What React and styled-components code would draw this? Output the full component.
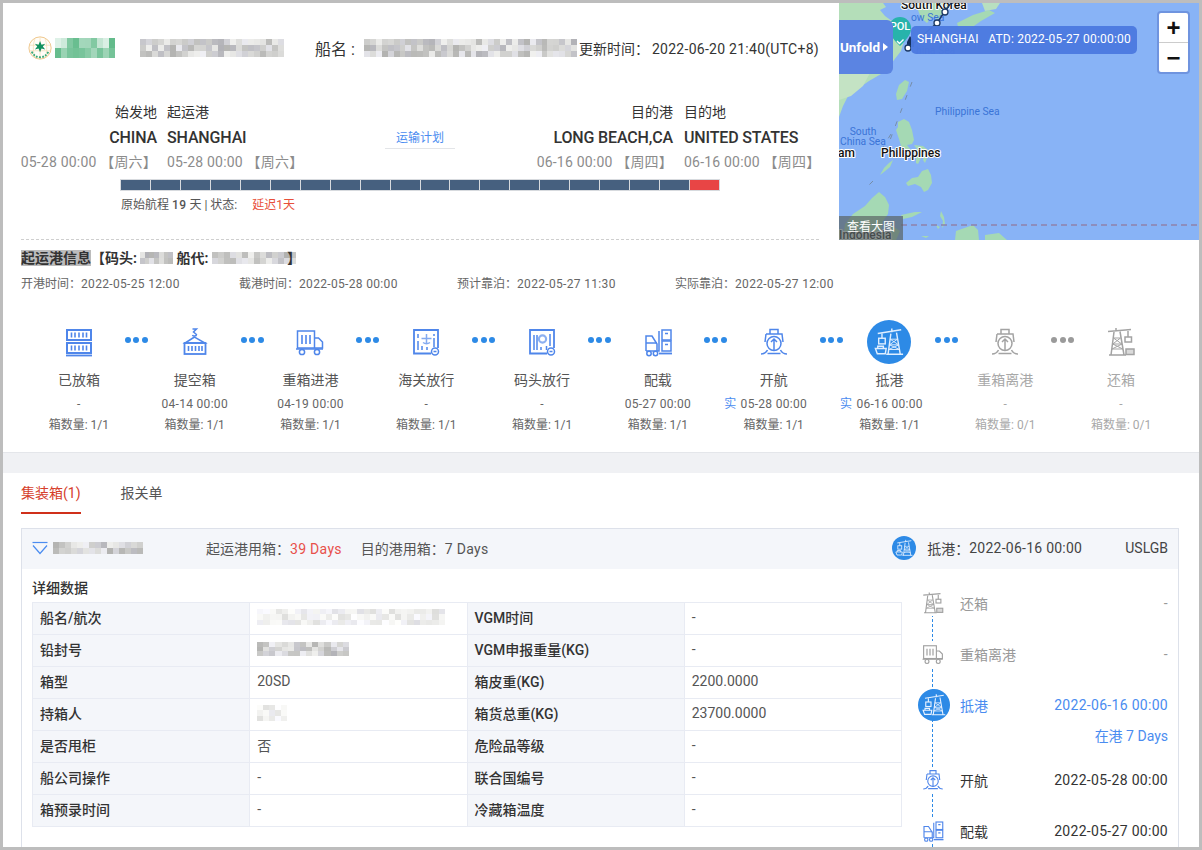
import React from 'react'
import styled, { createGlobalStyle } from 'styled-components'

const GlobalStyle = createGlobalStyle`
  html, body { margin: 0; padding: 0; background: #fff; }
  body { font-family: Roboto, "Noto Sans CJK SC", sans-serif; color: #333; }
  * { box-sizing: border-box; }
`

const Frame = styled.div`
  width: 1202px;
  height: 850px;
  border: 3px solid #bdbdbd;
  overflow: hidden;
  background: #fff;
`

const TopRow = styled.div`
  display: flex;
  height: 237px;
`

const Summary = styled.div`
  width: 836px;
  padding: 0 20px 0 18px;
  display: flex;
  flex-direction: column;
`

const Header = styled.div`
  height: 90px;
  display: flex;
  align-items: center;
  padding-left: 7px;
  margin-bottom: 9px;
`

const LogoText = styled.div`
  display: flex;
  align-items: center;
  margin: 0 25px 0 3px;
`

const ShipLabel = styled.span`
  font-size: 16px;
  color: #333;
  margin: 0 9px 0 31px;
  white-space: nowrap;
`

const UpdateTime = styled.span`
  font-size: 14px;
  color: #333;
  margin-left: 2px;
  white-space: nowrap;
  b {
    font-weight: 400;
    margin-left: 3px;
    letter-spacing: 0.27px;
  }
`

const RouteGrid = styled.div`
  display: grid;
  grid-template-columns: 136px 228px 70px 218px 1fr;
`

const PortCol = styled.div`
  display: flex;
  flex-direction: column;
  align-items: ${(p) => (p.$end ? 'flex-end' : 'flex-start')};
  padding-left: ${(p) => p.$inset || 0}px;
  white-space: nowrap;
`

const PortLabel = styled.div`
  font-size: 14px;
  line-height: 20px;
  color: #333;
`

const PortName = styled.div`
  height: 30px;
  padding-top: 1px;
  font-size: 16px;
  line-height: 30px;
  font-weight: 500;
  letter-spacing: -0.15px;
  color: #333;
`

const PortTime = styled.div`
  font-size: 14px;
  line-height: 20px;
  letter-spacing: 0.2px;
  color: #8c8c8c;
`

const PlanCol = styled.div`
  height: 47px;
  margin-top: 20px;
  padding-top: 7px;
`

const PlanLink = styled.div`
  font-size: 12px;
  line-height: 18px;
  color: #4a8cf0;
  text-align: center;
  padding-bottom: 1px;
  border-bottom: 1px solid #e3e5e8;
`

const Bar = styled.div`
  display: flex;
  gap: 1px;
  width: 600px;
  height: 12px;
  margin: 7px 0 0 99px;
  padding: 1px;
  background: #d7dade;
`

const BarCell = styled.div`
  flex: 1;
  background: ${(p) => (p.$late ? '#e84545' : '#46607f')};
`

const BarNote = styled.div`
  margin: 6px 0 0 100px;
  font-size: 12px;
  line-height: 16px;
  color: #555;
  b { font-weight: 500; letter-spacing: 0.4px; }
  em { font-style: normal; color: #e8503a; margin-left: 12px; }
`

const DashLine = styled.div`
  margin-top: auto;
  border-bottom: 1px dashed #cfcfcf;
`

const MapPanel = styled.div`
  position: relative;
  width: 360px;
  height: 237px;
  overflow: hidden;
  background: #88b3f6;
`

const Unfold = styled.div`
  position: absolute;
  left: 0;
  top: 17px;
  width: 54px;
  height: 54px;
  display: flex;
  align-items: center;
  justify-content: flex-end;
  padding-right: 5px;
  gap: 3px;
  background: #5b84e2;
  border-radius: 0 6px 6px 0;
  color: #fff;
  font-size: 13.5px;
  font-weight: 700;
  white-space: nowrap;
  i {
    flex-shrink: 0;
    border-left: 5px solid #fff;
    border-top: 4px solid transparent;
    border-bottom: 4px solid transparent;
  }
`

const MapTip = styled.div`
  position: absolute;
  left: 72px;
  top: 23px;
  width: 226px;
  height: 28px;
  padding-left: 6px;
  border-radius: 5px;
  background: rgba(76, 122, 224, 0.96);
  color: #fff;
  font-size: 12px;
  letter-spacing: 0.2px;
  line-height: 26px;
  white-space: pre;
`

const ZoomBox = styled.div`
  position: absolute;
  left: 318px;
  top: 8px;
  width: 33px;
  height: 63px;
  border: 2px solid #6f94df;
  border-radius: 4px;
  background: #fff;
  display: flex;
  flex-direction: column;
`

const ZoomBtn = styled.div`
  flex: 1;
  display: flex;
  align-items: center;
  justify-content: center;
  font: 700 24px/1 "Liberation Sans", sans-serif;
  color: #111;
  & + & { border-top: 1px solid #ccc; }
`

const BigMapLink = styled.div`
  position: absolute;
  left: 0;
  bottom: 0;
  width: 64px;
  height: 24px;
  padding-left: 8px;
  background: rgba(90, 100, 100, 0.7);
  color: #fff;
  font-size: 12px;
  line-height: 22px;
`

const Detail = styled.div`
  padding: 10px 18px 0;
`

const InfoTitle = styled.div`
  font-size: 14px;
  line-height: 16px;
  font-weight: 700;
  color: #333;
  display: flex;
  align-items: center;
  white-space: pre;
  mark { background: #bcbcbc; color: #333; }
  svg { margin-right: 3px; }
  svg:last-of-type { margin-right: -9px; }
`

const InfoRow = styled.div`
  display: grid;
  grid-template-columns: repeat(4, 218px);
  margin-top: 10px;
  font-size: 12px;
  line-height: 16px;
  color: #666;
  b { font-weight: 400; letter-spacing: 0.33px; }
`

const Steps = styled.div`
  display: flex;
  margin-top: 28px;
`

const Step = styled.div`
  position: relative;
  width: 115.8px;
  display: flex;
  flex-direction: column;
  align-items: center;
  color: ${(p) => (p.$off ? '#a8a8a8' : '#666')};
`

const StepIconWrap = styled.div`
  width: 44px;
  height: 44px;
  border-radius: 50%;
  display: flex;
  align-items: center;
  justify-content: center;
  background: ${(p) => (p.$active ? '#2d8ae6' : 'transparent')};
  color: ${(p) => (p.$active ? '#dfeeff' : p.$off ? '#a3a3a3' : '#4f86ea')};
`

const Dots = styled.div`
  position: absolute;
  right: -11px;
  top: 17px;
  display: flex;
  gap: 2.5px;
  i {
    width: 6px;
    height: 6px;
    border-radius: 50%;
    background: ${(p) => (p.$off ? '#9a9a9a' : '#2d8ae6')};
  }
`

const StepName = styled.div`
  margin-top: 6px;
  font-size: 14px;
  line-height: 20px;
  color: ${(p) => (p.$off ? '#a8a8a8' : '#555')};
`

const StepDate = styled.div`
  margin-top: 4px;
  font-size: 12px;
  line-height: 20px;
  letter-spacing: 0.3px;
  white-space: nowrap;
  span { color: #4a8cf0; margin: 0 4px 0 -16px; }
`

const StepCount = styled.div`
  margin-top: 1px;
  font-size: 12px;
  line-height: 20px;
`

const Band = styled.div`
  height: 21px;
  margin-top: 17px;
  background: #f0f1f4;
  border-top: 1px solid #e4e6ea;
`

const Tabs = styled.div`
  display: flex;
  gap: 40px;
  margin: 0 18px;
`

const Tab = styled.div`
  height: 41px;
  font-size: 14px;
  line-height: 40px;
  color: ${(p) => (p.$active ? '#d6402b' : '#555')};
  border-bottom: 2px solid ${(p) => (p.$active ? '#d0301a' : 'transparent')};
`

const Card = styled.div`
  margin: 14px 20px 0 18px;
  border: 1px solid #dde1ea;
  border-bottom: 0;
`

const CardHead = styled.div`
  height: 40px;
  display: flex;
  align-items: center;
  padding: 0 10px 3px;
  background: #f4f6fa;
  font-size: 14px;
  color: #555;
  white-space: nowrap;
`

const HeadMosaic = styled.div`
  display: flex;
  margin-left: 5px;
`

const UsedDays = styled.span`
  margin-left: ${(p) => p.$gap}px;
  b { font-weight: 400; letter-spacing: 0.3px; color: ${(p) => (p.$red ? '#e8504a' : 'inherit')}; }
`

const HeadRight = styled.div`
  margin-left: auto;
  display: flex;
  align-items: center;
  color: #444;
  b { font-weight: 400; letter-spacing: 0.25px; }
`

const MiniCircle = styled.div`
  width: 24px;
  height: 24px;
  border-radius: 50%;
  background: #2d8ae6;
  color: #e8f2ff;
  display: flex;
  align-items: center;
  justify-content: center;
  margin-right: 11px;
`

const PortCode = styled.span`
  margin-left: 43px;
`

const CardBody = styled.div`
  display: flex;
  padding: 0 10px;
`

const TableCol = styled.div`
  width: 870px;
  padding-top: 10px;
  flex-shrink: 0;
`

const TableTitle = styled.div`
  font-size: 14px;
  line-height: 18px;
  font-weight: 500;
  color: #333;
  margin-bottom: 5px;
`

const Table = styled.table`
  width: 870px;
  table-layout: fixed;
  border-collapse: collapse;
  font-size: 14px;
`

const Cell = styled.td`
  height: 32px;
  padding: 0 7px 3px;
  border: 1px solid #e8ebf3;
  background: ${(p) => (p.$head ? '#f4f6fa' : '#fff')};
  font-weight: ${(p) => (p.$head ? 500 : 400)};
  color: ${(p) => (p.$head ? '#333' : '#555')};
  white-space: nowrap;
  overflow: hidden;
  svg { display: block; }
`

const Timeline = styled.div`
  position: relative;
  flex: 1;
  margin-left: 16px;
  padding-top: 18px;
  display: flex;
  flex-direction: column;
  gap: 19px;
  &::before {
    content: '';
    position: absolute;
    left: 14px;
    top: 40px;
    bottom: 0;
    border-left: 1px dashed #2d8ae6;
  }
`

const TimeItem = styled.div`
  position: relative;
  font-size: 14px;
  color: ${(p) => p.$color};
`

const TimeMain = styled.div`
  display: flex;
  align-items: center;
  height: 32px;
`

const TimeIcon = styled.div`
  width: 30px;
  height: 26px;
  margin-right: 12px;
  display: flex;
  align-items: center;
  justify-content: center;
  background: #fff;
  color: ${(p) => p.$color};
`

const ActiveCircle = styled.div`
  width: 32px;
  height: 32px;
  margin-right: 10px;
  flex-shrink: 0;
  border-radius: 50%;
  background: #2d8ae6;
  color: #e8f2ff;
  display: flex;
  align-items: center;
  justify-content: center;
`

const TimeDate = styled.span`
  margin-left: auto;
  letter-spacing: 0.3px;
`

const TimeSub = styled.div`
  margin: 5px 0 -1px;
  line-height: 20px;
  text-align: right;
`

// pixelated stand-in for the blurred out parts of the screenshot
const Mosaic = ({ w, h, cols, rows = 3, seed = 7, green, light }) => {
  const cw = w / cols
  const ch = h / rows
  let n = seed * 97 + 13
  const rects = []
  for (let y = 0; y < rows; y++) {
    for (let x = 0; x < cols; x++) {
      n = (n * 31 + 17) % 257
      const t = n / 257
      let fill
      if (green) {
        const a = y === 0 ? 0.15 + t * 0.65 : 0.35 + t * 0.45
        fill = `rgba(60,170,110,${a.toFixed(2)})`
      } else {
        const v = Math.round((light ? 222 : 178) + t * (light ? 32 : 62))
        fill = `rgb(${v},${v},${v + (n % 3 === 0 ? 5 : -2)})`
      }
      rects.push(<rect key={`${x}-${y}`} x={x * cw} y={y * ch} width={cw + 0.3} height={ch + 0.3} fill={fill} />)
    }
  }
  return (
    <svg width={w} height={h} viewBox={`0 0 ${w} ${h}`} shapeRendering="crispEdges" style={{ flexShrink: 0 }}>
      {rects}
    </svg>
  )
}

const Logo = () => (
  <svg width="26" height="26" viewBox="0 0 26 26">
    <circle cx="13" cy="13" r="12" fill="#fffdf8" stroke="#eec384" strokeWidth="1" />
    <path d="M1.500 10h23M1.500 16h23M13 1v24M8 2c-3 6-3 16 0 22M18 2c3 6 3 16 0 22" fill="none" stroke="#f3d9ae" strokeWidth="0.7" />
    <path d="M13 5.500l1.600 4 4-1-2.600 3 2.600 3-4-1-1.600 4-1.600-4-4 1 2.600-3-2.600-3 4 1z" fill="#129160" />
    <path d="M4 17c2 4 5 6 9 6s7-2 9-6" fill="none" stroke="#3aa878" strokeWidth="2" strokeDasharray="2 1.400" />
  </svg>
)

const Chevron = () => (
  <svg width="16" height="14" viewBox="0 0 16 14" fill="none" stroke="#4a8cf0" strokeWidth="1.2">
    <path d="M0.500 1.500h15" />
    <path d="M1 4.500l7 8 7-8" />
  </svg>
)

const icons = {
  stack: (
    <>
      <rect x="4" y="4" width="24" height="10" strokeWidth="2" />
      <rect x="4" y="17" width="24" height="10" strokeWidth="2" />
      <path d="M8.500 6.500v5M12 6.500v5M16 6.500v5M20 6.500v5M23.500 6.500v5M8.500 19.500v5M12 19.500v5M16 19.500v5M20 19.500v5M23.500 19.500v5" strokeWidth="1.600" />
      <path d="M3 29.500h26" strokeWidth="1.800" />
    </>
  ),
  lift: (
    <>
      <path d="M13.500 3h4l-3 3 3 2.500c0 2-3.500 2-4 .5" />
      <path d="M15.500 11L6 17h20z" />
      <rect x="5.500" y="17" width="21" height="11" strokeWidth="1.800" />
      <path d="M9.500 20v5M13 20v5M16.500 20v5M20 20v5M23 20v5" strokeWidth="1.600" />
    </>
  ),
  truck: (
    <>
      <rect x="3.500" y="5" width="17" height="17" />
      <path d="M8 9v9M12 9v9M16 9v9" strokeWidth="1.600" />
      <path d="M21 12h3.500l4 4v6H21" />
      <path d="M2 23h27" />
      <circle cx="8" cy="26" r="2.600" />
      <circle cx="23" cy="26" r="2.600" />
    </>
  ),
  customs: (
    <>
      <path d="M21 27.500H4V4h24v18" strokeWidth="1.800" />
      <path d="M8 15v9M12 20v4M17 21v3M24 12v9M8 8v4M24 8v2" />
      <path d="M11.500 12.500h10M16.500 8v9M13 16.500c2 1.500 5 1.500 7 0" strokeOpacity="0.7" />
      <circle cx="25" cy="25.500" r="3.500" />
      <path d="M23.500 25.500h3" />
    </>
  ),
  terminal: (
    <>
      <path d="M21 27.500H4V4h24v18" strokeWidth="1.800" />
      <path d="M8 9v15M11 9v15M24 8v12M20.500 20v4M15 21v3" />
      <circle cx="16.500" cy="13" r="3.600" strokeWidth="2.200" strokeOpacity="0.65" />
      <circle cx="25" cy="25.500" r="3.500" />
      <path d="M23.500 25.500h3" />
    </>
  ),
  fork: (
    <>
      <path d="M4 25V10h6l5 8v7" />
      <path d="M4 17h11M4 25h13V5" />
      <path d="M17 27.500h13" strokeWidth="1.800" />
      <rect x="20" y="4" width="9" height="10" />
      <rect x="20" y="15" width="9" height="10" />
      <path d="M23 7.500h3M23 18.500h3" />
      <circle cx="7" cy="27.500" r="2.200" />
      <circle cx="13.500" cy="27.500" r="2.200" />
    </>
  ),
  ship: (
    <>
      <path d="M12 8V3.500h8V8" />
      <path d="M8 8h16l1 8M8 8l-1 8" />
      <circle cx="16" cy="17.500" r="7" />
      <path d="M16 24.500V13M13 16l3-3 3 3" />
      <path d="M3 28c3 0 5-1 6.500-4M29 28c-3 0-5-1-6.500-4M9.500 27.500h13" />
    </>
  ),
  crane: (
    <>
      <path d="M4 7l25-4M19 1.500v4" />
      <path d="M18 7L15 29M24 6l4 23M13 29h18" />
      <path d="M17.300 13h8M16.500 19h10M15.700 24h11.500M17.300 13l9 6M25 13l-8.500 6M16.500 19l10.700 5M26.500 19l-10.800 5" strokeWidth="1" />
      <path d="M8.500 7v5" />
      <rect x="5" y="12" width="7" height="6" />
      <path d="M1.500 23H13l-1 5.500H3.500z" />
      <path d="M4 23v-2.500h6V23" />
    </>
  ),
  yard: (
    <>
      <path d="M3 5.500l23-2M11 2v3" />
      <path d="M9 6L6 29M15 5.500L19 29M4 29h17" />
      <path d="M8.500 12h7M7.800 18h9M7 23h11M8.500 12l8.300 6M15.500 12l-7.700 6M7.800 18l10 5M17 18l-10 5" strokeWidth="1" />
      <path d="M23 5v6" />
      <rect x="20" y="11" width="6.500" height="5" />
      <rect x="21" y="23" width="8" height="5.500" fill="currentColor" fillOpacity="0.4" />
    </>
  ),
}

const Glyph = ({ name, size = 32 }) => (
  <svg width={size} height={size} viewBox="0 0 32 32" fill="none" stroke="currentColor" strokeWidth="1.500">
    {icons[name]}
  </svg>
)

const MapCanvas = () => (
  <svg width="360" height="237" viewBox="0 0 360 237" style={{ display: 'block' }}>
    <g fill="#a5d9b4">
      <path d="M0 0h44l3 4-6 3 5 6 11 8 5 10 3 7-3 10-7 9-6 8-7 6-12 7-10 7-10 6-6 12L0 114z" fill="#b4deb9" />
      <path d="M0 64l22-6 10 10-8 15-12 10-12 4z" fill="#c4e3c4" />
      <path d="M76 0h36l-4 6-9 10-6-2-5 6-6-5-3-8z" fill="#a8dab5" />
      <path d="M118 20l16-8 16-5 6 3-14 8-10 7-12 2z" />
      <path d="M143 0h18l-4 6-11 2z" fill="#b8dfc0" />
      <path d="M66 77l4 2-2 9-5 8-5 1-1-6 3-9z" />
      <path d="M59 119l6-3 5 3 3 8 2 10-2 4-5 1 4 5-3 3-7-7-2-7-3-9 2-3z" />
      <path d="M75 142l9 1 6 5-6-1-5 1z" />
      <path d="M77 153l5 2-3 6-2-1zM85 150l3 5-2 5-2-3z" />
      <path d="M83 168l6-2 3 6 1 8-4 7-4 2-3-5-6-3-7 2-2-3 6-5 6-1z" />
      <path d="M54 157l-3 7-6 5-4 3 4-7 5-5z" />
      <path d="M6 221l8-10 12-8 7-8 7-6 6 5 4 8-1 9-5 7-2 8-4 11H4z" />
      <path d="M62 212l14-3 7 0-10 5-9 2zM52 222l9 6-4 9h-7z" />
      <path d="M102 208l3 6 1 7-3 4 1-7-3-5z" />
      <path d="M82 233h8l-3 2zM117 228l17-6 5 5 1 10h-24zM146 232l14-2 8 7h-22zM97 222l4 2-2 2z" />
    </g>
    <path d="M62 222h298" stroke="#8e82ab" strokeWidth="1.400" strokeDasharray="6 4" fill="none" />
    <g stroke="#6d7c86" strokeWidth="0.700" fill="none" strokeDasharray="5 9">
      <path d="M73 79L48 145M52 131L39 152M34 178L30 182" />
    </g>
    <g fontFamily="Roboto, sans-serif" fontSize="10.300" fill="#3a74d6">
      <text x="96" y="112">Philippine Sea</text>
      <text x="24" y="132" textAnchor="middle">South</text>
      <text x="1" y="142">China Sea</text>
      <text x="72" y="18">ow Sea</text>
      <text x="77" y="51">hina Sea</text>
    </g>
    <g fontFamily="Roboto, sans-serif" fontSize="12" fontWeight="500" fill="#111" stroke="#fff" strokeWidth="2" paintOrder="stroke" strokeLinejoin="round">
      <text x="62" y="6">South Korea</text>
      <text x="-1" y="154">am</text>
      <text x="42" y="154">Philippines</text>
      <text x="0" y="236">Indonesia</text>
    </g>
    <path d="M69 45L98 20l8-12 6-8" stroke="#1d3a66" strokeWidth="1.400" fill="none" />
    <path d="M61 43c-8-8-11-12-11-18a11 11 0 0 1 22 0c0 6-3 10-11 18z" fill="#27b3ab" />
    <text x="61" y="27" textAnchor="middle" fontFamily="Roboto, sans-serif" fontSize="11" fontWeight="500" fill="#fff">POL</text>
    <path d="M58 38l2.500 2.500 4-4" stroke="#fff" strokeWidth="1.400" fill="none" />
    <path d="M71 33l4 6v5h-7v-5z" fill="#14305c" />
    <g fill="#fff" stroke="#1d3a66" strokeWidth="1.300">
      <circle cx="69" cy="45" r="3" />
      <circle cx="98" cy="20" r="3" />
      <circle cx="106" cy="9" r="3" />
    </g>
  </svg>
)

const steps = [
  { name: '已放箱', icon: 'stack', date: '-', count: '1/1' },
  { name: '提空箱', icon: 'lift', date: '04-14 00:00', count: '1/1' },
  { name: '重箱进港', icon: 'truck', date: '04-19 00:00', count: '1/1' },
  { name: '海关放行', icon: 'customs', date: '-', count: '1/1' },
  { name: '码头放行', icon: 'terminal', date: '-', count: '1/1' },
  { name: '配载', icon: 'fork', date: '05-27 00:00', count: '1/1' },
  { name: '开航', icon: 'ship', date: '05-28 00:00', actual: true, count: '1/1' },
  { name: '抵港', icon: 'crane', date: '06-16 00:00', actual: true, count: '1/1', active: true },
  { name: '重箱离港', icon: 'ship', date: '-', count: '0/1', off: true },
  { name: '还箱', icon: 'yard', date: '-', count: '0/1', off: true, last: true },
]

const tableRows = [
  ['船名/航次', <Mosaic key="a" w={188} h={16} cols={30} seed={3} light />, 'VGM时间', '-'],
  ['铅封号', <Mosaic key="b" w={92} h={14} cols={15} seed={5} />, 'VGM申报重量(KG)', '-'],
  ['箱型', '20SD', '箱皮重(KG)', '2200.0000'],
  ['持箱人', <Mosaic key="c" w={30} h={16} cols={5} seed={9} light />, '箱货总重(KG)', '23700.0000'],
  ['是否甩柜', '否', '危险品等级', '-'],
  ['船公司操作', '-', '联合国编号', '-'],
  ['箱预录时间', '-', '冷藏箱温度', '-'],
]

const timeline = [
  { name: '还箱', icon: 'yard', date: '-', color: '#999' },
  { name: '重箱离港', icon: 'truck', date: '-', color: '#999' },
  { name: '抵港', icon: 'crane', date: '2022-06-16 00:00', color: '#4a8cf0', active: true, sub: '在港 7 Days' },
  { name: '开航', icon: 'ship', date: '2022-05-28 00:00', color: '#333', tint: '#4f86ea' },
  { name: '配载', icon: 'fork', date: '2022-05-27 00:00', color: '#333', tint: '#4f86ea' },
]

export default function App() {
  return (
    <Frame>
      <GlobalStyle />
      <TopRow>
        <Summary>
          <Header>
            <Logo />
            <LogoText>
              <Mosaic w={60} h={20} cols={10} rows={2} seed={2} green />
            </LogoText>
            <Mosaic w={144} h={18} cols={24} seed={11} />
            <ShipLabel>船名 :</ShipLabel>
            <Mosaic w={213} h={18} cols={36} seed={4} />
            <UpdateTime>
              更新时间：<b>2022-06-20 21:40(UTC+8)</b>
            </UpdateTime>
          </Header>
          <RouteGrid>
            <PortCol $end>
              <PortLabel>始发地</PortLabel>
              <PortName>CHINA</PortName>
              <PortTime>05-28 00:00 【周六】</PortTime>
            </PortCol>
            <PortCol $inset={10}>
              <PortLabel>起运港</PortLabel>
              <PortName>SHANGHAI</PortName>
              <PortTime>05-28 00:00 【周六】</PortTime>
            </PortCol>
            <PlanCol>
              <PlanLink>运输计划</PlanLink>
            </PlanCol>
            <PortCol $end>
              <PortLabel>目的港</PortLabel>
              <PortName>LONG BEACH,CA</PortName>
              <PortTime>06-16 00:00 【周四】</PortTime>
            </PortCol>
            <PortCol $inset={11}>
              <PortLabel>目的地</PortLabel>
              <PortName>UNITED STATES</PortName>
              <PortTime>06-16 00:00 【周四】</PortTime>
            </PortCol>
          </RouteGrid>
          <Bar>
            {Array.from({ length: 20 }, (_, i) => (
              <BarCell key={i} $late={i === 19} />
            ))}
          </Bar>
          <BarNote>
            原始航程 <b>19</b> 天 | 状态: <em>延迟1天</em>
          </BarNote>
          <DashLine />
        </Summary>
        <MapPanel>
          <MapCanvas />
          <Unfold>
            Unfold <i />
          </Unfold>
          <MapTip>SHANGHAI   ATD: 2022-05-27 00:00:00</MapTip>
          <ZoomBox>
            <ZoomBtn>+</ZoomBtn>
            <ZoomBtn>−</ZoomBtn>
          </ZoomBox>
          <BigMapLink>查看大图</BigMapLink>
        </MapPanel>
      </TopRow>

      <Detail>
        <InfoTitle>
          <mark>起运港信息</mark>【码头: <Mosaic w={33} h={12} cols={7} rows={2} seed={6} />船代: <Mosaic w={84} h={12} cols={14} rows={2} seed={8} />】
        </InfoTitle>
        <InfoRow>
          <span>开港时间：<b>2022-05-25 12:00</b></span>
          <span>截港时间：<b>2022-05-28 00:00</b></span>
          <span>预计靠泊：<b>2022-05-27 11:30</b></span>
          <span>实际靠泊：<b>2022-05-27 12:00</b></span>
        </InfoRow>
        <Steps>
          {steps.map((s) => (
            <Step key={s.name} $off={s.off}>
              <StepIconWrap $active={s.active} $off={s.off}>
                <Glyph name={s.icon} size={s.active ? 30 : 32} />
              </StepIconWrap>
              {!s.last && (
                <Dots $off={s.name === '重箱离港'}>
                  <i />
                  <i />
                  <i />
                </Dots>
              )}
              <StepName $off={s.off}>{s.name}</StepName>
              <StepDate>
                {s.actual && <span>实</span>}
                {s.date}
              </StepDate>
              <StepCount>箱数量: {s.count}</StepCount>
            </Step>
          ))}
        </Steps>
      </Detail>

      <Band />
      <Tabs>
        <Tab $active>集装箱(1)</Tab>
        <Tab>报关单</Tab>
      </Tabs>

      <Card>
        <CardHead>
          <Chevron />
          <HeadMosaic>
            <Mosaic w={90} h={12} cols={15} rows={2} seed={12} />
          </HeadMosaic>
          <UsedDays $gap={63} $red>
            起运港用箱：<b>39 Days</b>
          </UsedDays>
          <UsedDays $gap={19}>
            目的港用箱：<b>7 Days</b>
          </UsedDays>
          <HeadRight>
            <MiniCircle>
              <Glyph name="crane" size={18} />
            </MiniCircle>
            抵港：<b>2022-06-16 00:00</b>
            <PortCode>USLGB</PortCode>
          </HeadRight>
        </CardHead>
        <CardBody>
          <TableCol>
            <TableTitle>详细数据</TableTitle>
            <Table>
              <tbody>
                {tableRows.map((row, i) => (
                  <tr key={i}>
                    {row.map((value, j) => (
                      <Cell key={j} $head={j % 2 === 0}>
                        {value}
                      </Cell>
                    ))}
                  </tr>
                ))}
              </tbody>
            </Table>
          </TableCol>
          <Timeline>
            {timeline.map((t) => (
              <TimeItem key={t.name} $color={t.color}>
                <TimeMain>
                  {t.active ? (
                    <ActiveCircle>
                      <Glyph name={t.icon} size={24} />
                    </ActiveCircle>
                  ) : (
                    <TimeIcon $color={t.tint || '#a0a0a0'}>
                      <Glyph name={t.icon} size={24} />
                    </TimeIcon>
                  )}
                  {t.name}
                  <TimeDate>{t.date}</TimeDate>
                </TimeMain>
                {t.sub && <TimeSub>{t.sub}</TimeSub>}
              </TimeItem>
            ))}
          </Timeline>
        </CardBody>
      </Card>
    </Frame>
  )
}
